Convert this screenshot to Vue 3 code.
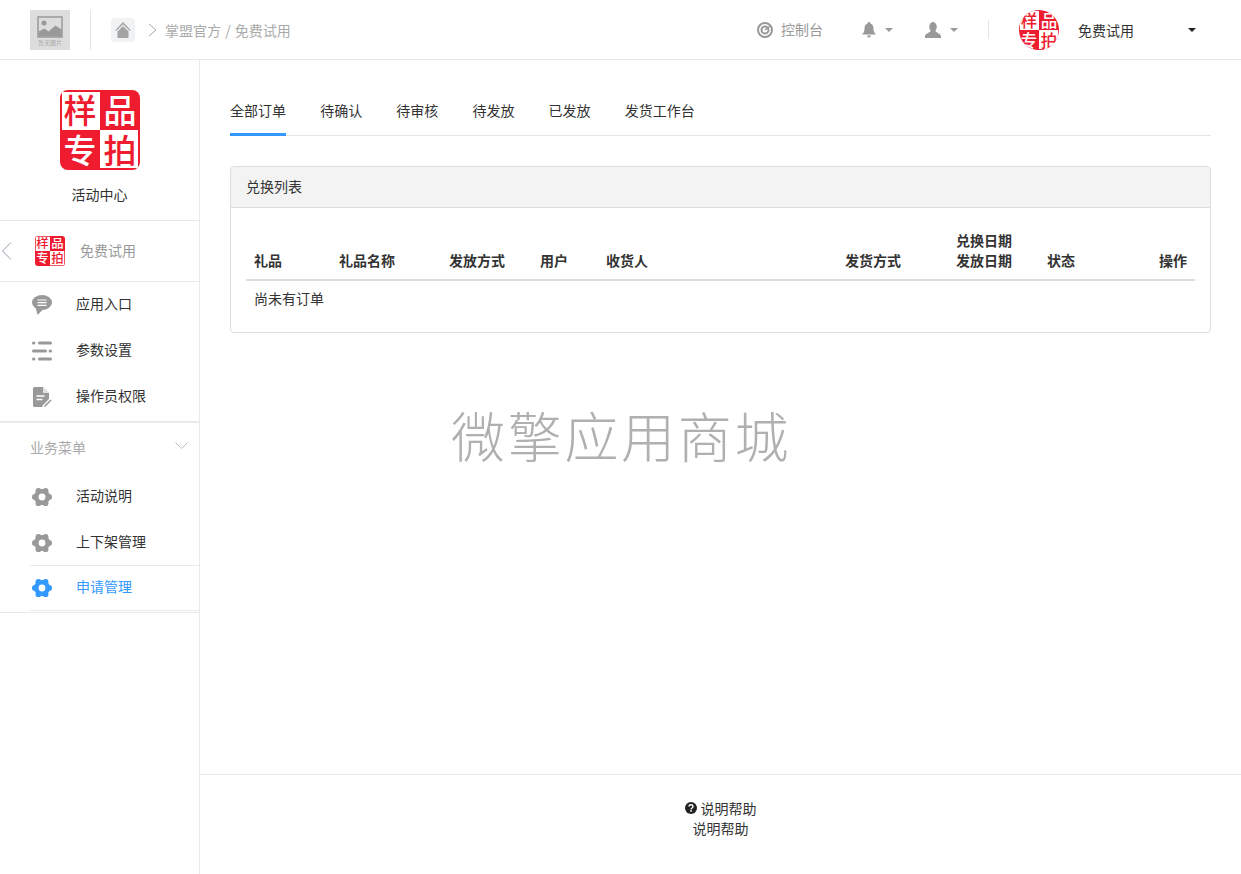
<script setup>
const logoCells = [
  { t: '样', x: 20, y: 33, c: '#ee1c2e' },
  { t: '品', x: 60, y: 33, c: '#fff' },
  { t: '专', x: 20, y: 73, c: '#fff' },
  { t: '拍', x: 60, y: 73, c: '#ee1c2e' }
]
const tabs = ['全部订单', '待确认', '待审核', '待发放', '已发放', '发货工作台']
const cols = [
  { w: 85, t: ['礼品'] },
  { w: 110, t: ['礼品名称'] },
  { w: 91, t: ['发放方式'] },
  { w: 66, t: ['用户'] },
  { w: 239, t: ['收货人'] },
  { w: 111, t: ['发货方式'] },
  { w: 91, t: ['兑换日期', '发放日期'] },
  { w: 96, t: ['状态'] },
  { w: 60, t: ['操作'], right: true }
]
const lobes = [0, 60, 120, 180, 240, 300].map((a) => ({
  a,
  cx: 10 + 7.1 * Math.cos((a * Math.PI) / 180),
  cy: 10 + 7.1 * Math.sin((a * Math.PI) / 180)
}))
</script>

<template>
  <div class="page">
    <header class="top">
      <div class="thumb">
        <svg width="26" height="22" viewBox="0 0 26 22">
          <rect x="1" y="1" width="24" height="20" fill="none" stroke="#999" stroke-width="1.500" />
          <circle cx="7" cy="7" r="2.500" fill="#999" />
          <path d="M1.500 20.500v-5l6-3 4 3 7-6 6 4v7z" fill="#999" />
        </svg>
        <span class="thumb-text">暂无图片</span>
      </div>
      <span class="vline tall"></span>
      <div class="home">
        <svg width="18" height="18" viewBox="0 0 18 18">
          <path d="M9 1 17 9.500h-1.800L9 3.300 2.800 9.500H1z" fill="#a4a4a4" />
          <path d="M9 5l5.500 5.500V17h-11v-6.500z" fill="#a4a4a4" />
        </svg>
      </div>
      <svg class="crumb-arrow" width="9" height="14" viewBox="0 0 9 14">
        <path d="M1 1l7 6-7 6" fill="none" stroke="#aaa" stroke-width="1" />
      </svg>
      <span class="crumb">掌盟官方 / 免费试用</span>

      <div class="top-right">
        <svg class="target" width="16" height="16" viewBox="0 0 16 16">
          <circle cx="8" cy="8" r="7" fill="none" stroke="#999" stroke-width="2" />
          <circle cx="8" cy="8" r="3.500" fill="none" stroke="#999" stroke-width="2" />
          <path d="M8 8l5-4" stroke="#999" stroke-width="1.500" />
        </svg>
        <span class="console">控制台</span>
        <svg class="bell" width="14" height="16" viewBox="0 0 14 16">
          <path d="M7 0a1.300 1.300 0 0 1 1.300 1.500C10.500 2 11.500 4 11.500 6.500c0 3 .8 4.300 2.500 6H0c1.700-1.700 2.500-3 2.500-6C2.500 4 3.500 2 5.700 1.500A1.300 1.300 0 0 1 7 0z" fill="#999" />
          <path d="M5 13.500h4a2 2 0 0 1-4 0z" fill="#999" />
        </svg>
        <i class="caret grey"></i>
        <svg class="user" width="16" height="16" viewBox="0 0 16 16">
          <ellipse cx="8" cy="4.800" rx="3.800" ry="4.800" fill="#999" />
          <path d="M5.500 9c0 1.500-5.500 2.500-5.500 5.200V16h16v-1.800C16 11.500 10.500 10.500 10.500 9z" fill="#999" />
        </svg>
        <i class="caret grey"></i>
        <span class="vline short"></span>
        <svg class="avatar" width="40" height="40" viewBox="0 0 80 80">
          <rect width="80" height="80" fill="#ee1c2e" />
          <rect x="2" y="2" width="38" height="38" fill="#fff" />
          <rect x="40" y="40" width="38" height="38" fill="#fff" />
          <text v-for="c in logoCells" :key="c.t" :x="c.x" :y="c.y" :fill="c.c" class="logo-glyph">{{ c.t }}</text>
        </svg>
        <span class="account">免费试用</span>
        <i class="caret dark"></i>
      </div>
    </header>

    <div class="body">
      <aside class="side">
        <div class="brand">
          <svg class="brand-logo" width="80" height="80" viewBox="0 0 80 80">
            <rect width="80" height="80" fill="#ee1c2e" />
            <rect x="2" y="2" width="38" height="38" fill="#fff" />
            <rect x="40" y="40" width="38" height="38" fill="#fff" />
            <text v-for="c in logoCells" :key="c.t" :x="c.x" :y="c.y" :fill="c.c" class="logo-glyph">{{ c.t }}</text>
          </svg>
          <div class="brand-name">活动中心</div>
        </div>

        <div class="back-row">
          <svg class="back-arrow" width="11" height="18" viewBox="0 0 11 18">
            <path d="M10 .5 1.500 9l8.500 8.500" fill="none" stroke="#99a" stroke-width="1" />
          </svg>
          <svg class="back-logo" width="30" height="30" viewBox="0 0 80 80">
            <rect width="80" height="80" fill="#ee1c2e" />
            <rect x="2" y="2" width="38" height="38" fill="#fff" />
            <rect x="40" y="40" width="38" height="38" fill="#fff" />
            <text v-for="c in logoCells" :key="c.t" :x="c.x" :y="c.y" :fill="c.c" class="logo-glyph">{{ c.t }}</text>
          </svg>
          <span>免费试用</span>
        </div>

        <ul class="menu first">
          <li>
            <svg width="20" height="20" viewBox="0 0 20 20">
              <ellipse cx="10" cy="7.500" rx="10" ry="7.500" fill="#999" />
              <path d="M3.500 12 5.500 20l5-5z" fill="#999" />
              <path d="M5.500 5h9M5.500 7.700h9M5.500 10.400h9" stroke="#fff" stroke-width="1.200" />
            </svg>
            <span>应用入口</span>
          </li>
          <li>
            <svg width="20" height="20" viewBox="0 0 20 20">
              <path d="M1.500 2h.4M7.500 2h11M1.500 10h12M18.100 10h.4M1.500 18h.4M7.500 18h11" stroke="#999" stroke-width="3" stroke-linecap="round" />
            </svg>
            <span>参数设置</span>
          </li>
          <li>
            <svg width="20" height="20" viewBox="0 0 20 20">
              <path d="M1 1.500C1 .7 1.700 0 2.500 0H11l6 6v6l-6.500 6.500V20H2.500C1.700 20 1 19.300 1 18.500z" fill="#999" />
              <path d="M11 0v6h6" fill="#fff" opacity=".7" />
              <path d="M4.500 9h8M4.500 12.500h6" stroke="#fff" stroke-width="1.400" />
              <path d="M12.500 19.500 19 13" stroke="#999" stroke-width="1.600" />
            </svg>
            <span>操作员权限</span>
          </li>
        </ul>

        <div class="group-title">
          <span>业务菜单</span>
          <svg width="13" height="8" viewBox="0 0 13 8">
            <path d="M.5.500l6 6 6-6" fill="none" stroke="#bbb" stroke-width="1" />
          </svg>
        </div>

        <ul class="menu second">
          <li>
            <svg width="20" height="20" viewBox="0 0 20 20" fill="#999">
              <circle v-for="l in lobes" :key="l.a" :cx="l.cx" :cy="l.cy" r="2.900" />
              <circle cx="10" cy="10" r="8" />
              <circle cx="10" cy="10" r="3.400" fill="#fff" />
            </svg>
            <span>活动说明</span>
          </li>
          <li>
            <svg width="20" height="20" viewBox="0 0 20 20" fill="#999">
              <circle v-for="l in lobes" :key="l.a" :cx="l.cx" :cy="l.cy" r="2.900" />
              <circle cx="10" cy="10" r="8" />
              <circle cx="10" cy="10" r="3.400" fill="#fff" />
            </svg>
            <span>上下架管理</span>
          </li>
          <li class="active">
            <svg width="20" height="20" viewBox="0 0 20 20" fill="#3399ff">
              <circle v-for="l in lobes" :key="l.a" :cx="l.cx" :cy="l.cy" r="2.900" />
              <circle cx="10" cy="10" r="8" />
              <circle cx="10" cy="10" r="3.400" fill="#fff" />
            </svg>
            <span>申请管理</span>
          </li>
        </ul>
        <div class="side-end"></div>
      </aside>

      <main class="main">
        <div class="content">
          <nav class="tabs">
            <a v-for="(tab, i) in tabs" :key="tab" class="tab" :class="{ on: i === 0 }">{{ tab }}</a>
          </nav>

          <section class="card">
            <div class="card-head">兑换列表</div>
            <div class="card-body">
              <table class="grid">
                <colgroup>
                  <col v-for="c in cols" :key="c.t[0]" :style="{ width: c.w + 'px' }" />
                </colgroup>
                <thead>
                  <tr>
                    <th v-for="c in cols" :key="c.t[0]" :class="{ right: c.right }">
                      <div v-for="line in c.t" :key="line">{{ line }}</div>
                    </th>
                  </tr>
                </thead>
                <tbody>
                  <tr><td colspan="9">尚未有订单</td></tr>
                </tbody>
              </table>
            </div>
          </section>
        </div>

        <footer class="foot">
          <div class="help">
            <svg width="12" height="12" viewBox="0 0 12 12">
              <circle cx="6" cy="6" r="6" fill="#222" />
              <path d="M4 4.600C4 3.400 4.900 2.700 6 2.700s2 .7 2 1.800c0 1.500-2 1.400-2 3" fill="none" stroke="#fff" stroke-width="1.400" />
              <rect x="5.200" y="8.200" width="1.600" height="1.500" fill="#fff" />
            </svg>
            说明帮助
          </div>
          <div>说明帮助</div>
        </footer>

        <div class="watermark">微擎应用商城</div>
      </main>
    </div>
  </div>
</template>

<style>
html, body { margin: 0; padding: 0; background: #fff; }
</style>

<style scoped>
* { box-sizing: border-box; }
.page {
  width: 1241px;
  height: 874px;
  display: flex;
  flex-direction: column;
  overflow: hidden;
  font-family: "Noto Sans CJK SC", "Liberation Sans", sans-serif;
  font-size: 14px;
  line-height: 20px;
  color: #333;
}
.top {
  height: 60px;
  flex: none;
  display: flex;
  align-items: center;
  padding-left: 30px;
  border-bottom: 1px solid #e9e9e9;
}
.thumb {
  width: 40px;
  height: 40px;
  background: #ddd;
  display: flex;
  flex-direction: column;
  align-items: center;
  padding-top: 6px;
}
.thumb svg { flex: none; }
.thumb-text { font-size: 6px; line-height: 10px; color: #aaa; white-space: nowrap; }
.vline { display: block; width: 1px; background: #e5e5e5; }
.vline.tall { height: 40px; margin-left: 20px; }
.vline.short { height: 19px; margin-left: 30px; }
.home {
  width: 24px;
  height: 24px;
  margin-left: 20px;
  background: #f0f2f4;
  border-radius: 4px;
  display: flex;
  align-items: center;
  justify-content: center;
}
.crumb-arrow { margin-left: 13px; }
.crumb { margin-left: 8px; color: #aaa; word-spacing: 1px; }
.top-right { margin-left: auto; display: flex; align-items: center; padding-right: 45px; }
.console { margin-left: 8px; margin-bottom: 2px; color: #999; }
.bell { margin-left: 39px; }
.caret { display: block; width: 0; height: 0; border-style: solid; border-width: 4px 4px 0; border-color: #999 transparent transparent; }
.caret.grey { margin-left: 9px; }
.user { margin-left: 32px; }
.avatar { margin-left: 30px; border-radius: 50%; }
.account { margin-left: 19px; width: 110px; color: #333; }
.caret.dark { border-top-color: #222; border-width: 4.500px 4.500px 0; }
.logo-glyph {
  font-family: "Noto Sans CJK SC", sans-serif;
  font-size: 33px;
  font-weight: 500;
  text-anchor: middle;
}

.body { flex: 1; display: flex; min-height: 0; }
.side { width: 200px; flex: none; border-right: 1px solid #e9e9e9; display: flex; flex-direction: column; }
.brand { height: 161px; padding-top: 30px; border-bottom: 1px solid #e9e9e9; text-align: center; }
.brand-logo { display: block; margin: 0 auto; border-radius: 8px; }
.brand-name { margin-top: 14px; }
.back-row { height: 61px; display: flex; align-items: center; border-bottom: 1px solid #e9e9e9; color: #999; padding-left: 1px; }
.back-logo { margin-left: 23px; border-radius: 3px; }
.back-row span { margin-left: 15px; margin-bottom: 2px; }
.menu { list-style: none; margin: 0; padding: 0; }
.menu li { height: 46px; display: flex; align-items: center; padding-left: 32px; }
.menu li span { margin-left: 24px; margin-bottom: 4px; }
.menu.first { height: 141px; border-bottom: 2px solid #e9e9e9; }
.group-title { height: 51px; display: flex; align-items: flex-start; justify-content: space-between; padding: 14px 11px 0 30px; color: #aaa; }
.group-title svg { margin-top: 5px; }
.menu.second li:nth-child(2) { border-bottom: 1px solid #e9e9e9; margin-left: 30px; padding-left: 2px; }
.menu.second .active { height: 45px; color: #3399ff; margin-left: 30px; padding-left: 2px; border-bottom: 1px solid #e9e9e9; }
.side-end { border-top: 1px solid #e9e9e9; margin-top: 1px; }

.main { flex: 1; min-width: 0; position: relative; display: flex; flex-direction: column; }
.content { flex: 1; padding: 32px 30px 0; }
.tabs { display: flex; gap: 34.150px; height: 44px; border-bottom: 1px solid #e5e5e5; }
.tab { height: 44px; padding-top: 8px; color: #333; }
.tab.on { border-bottom: 3px solid #3399ff; }
.card { margin-top: 30px; border: 1px solid #ddd; border-radius: 4px; height: 167px; }
.card-head { height: 41px; padding: 9px 15px; background: #f3f3f3; border-bottom: 1px solid #ddd; border-radius: 3px 3px 0 0; }
.card-body { padding: 15px; }
.grid { width: 949px; border-collapse: collapse; table-layout: fixed; }
th { padding: 7px 8px 9px; text-align: left; vertical-align: bottom; border-bottom: 2px solid #ddd; font-weight: 700; color: #333; height: 56px; }
th.right { text-align: right; }
td { padding: 7px 8px 0; }
.foot { height: 100px; flex: none; border-top: 1px solid #e9e9e9; padding-top: 23px; text-align: center; color: #333; }
.help { display: flex; align-items: center; justify-content: center; gap: 4px; }
.watermark {
  position: absolute;
  left: 251px;
  top: 335px;
  font-size: 54px;
  letter-spacing: 2.700px;
  line-height: 80px;
  font-weight: 300;
  color: #b0b0b0;
  white-space: nowrap;
}
</style>
